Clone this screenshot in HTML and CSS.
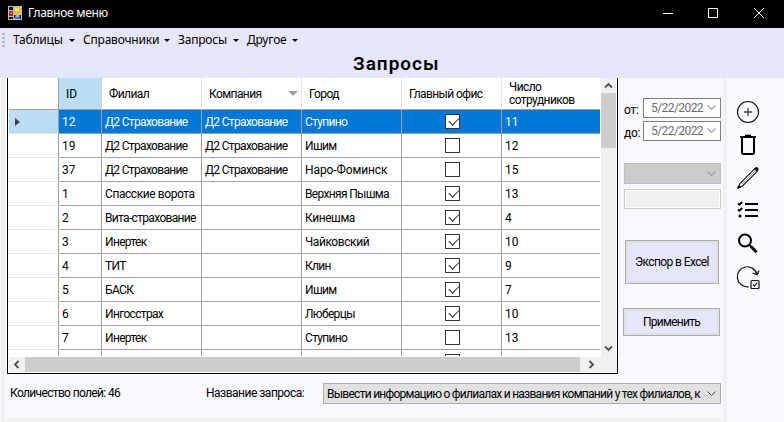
FILE: index.html
```html
<!DOCTYPE html>
<html lang="ru">
<head>
<meta charset="utf-8">
<title>Главное меню</title>
<link rel="stylesheet" href="styles.css">
</head>
<body>
<div class="window">
  <header class="titlebar">
    <svg class="app-icon" width="14" height="14" viewBox="0 0 14 14"><path fill="#bbb" d="M0 0h14v14H0z"/><path fill="#111" d="M1 1h4v3H1zM1 11h4v2H1zM12 9h1v4h-1zM6 9h1v3H6z"/><path fill="#f2bd24" d="M6 1h7v7H6z"/><path fill="#ffe48a" d="M7 2h4v3H7z"/><path fill="#b52222" d="M1 5h4v5H1z"/><path fill="#e76a5a" d="M2 6h2v2H2z"/><path fill="#3478e4" d="M7 9h5v4H7z"/><path fill="#82b5ff" d="M8 9h3v2H8z"/></svg>
    <span class="caption">Главное меню</span>
    <svg class="controls" width="104" height="12" viewBox="0 0 104 12" fill="none" stroke="#fff"><path d="M1 6.500h10M46.500 1.500h9v9h-9zM92 1l10 10M102 1L92 11"/></svg>
  </header>
  <div class="top">
    <nav class="menu">
      <i class="grip"></i>
      <span class="m1">Таблицы</span><span class="m2">Справочники</span><span class="m3">Запросы</span><span class="m4">Другое</span>
    </nav>
    <h1>Запросы</h1>
  </div>
  <div class="body">
    <main class="panel">
      <div class="work">
        <section class="grid">
          <div class="view">
            <div class="rows">
              <div class="row head"><b></b><b class="sel">ID</b><b>Филиал</b><b class="sorted">Компания</b><b>Город</b><b class="office">Главный офис</b><b class="two">Число<br>сотрудников</b></div>
              <div class="row active"><i><svg width="5" height="8"><path d="M0 0l5 4-5 4z" fill="#404040"/></svg></i><i class="num">12</i><i>Д2 Страхование</i><i>Д2 Страхование</i><i>Ступино</i><i class="check on"></i><i class="num">11</i></div>
              <div class="row"><i></i><i class="num">19</i><i>Д2 Страхование</i><i>Д2 Страхование</i><i>Ишим</i><i class="check"></i><i class="num">12</i></div>
              <div class="row"><i></i><i class="num">37</i><i>Д2 Страхование</i><i>Д2 Страхование</i><i class="num">Наро-Фоминск</i><i class="check"></i><i class="num">15</i></div>
              <div class="row"><i></i><i class="num">1</i><i class="loose">Спасские ворота</i><i></i><i>Верхняя Пышма</i><i class="check on"></i><i class="num">13</i></div>
              <div class="row"><i></i><i class="num">2</i><i>Вита-страхование</i><i></i><i class="loose">Кинешма</i><i class="check on"></i><i class="num">4</i></div>
              <div class="row"><i></i><i class="num">3</i><i>Инертек</i><i></i><i class="loose">Чайковский</i><i class="check on"></i><i class="num">10</i></div>
              <div class="row"><i></i><i class="num">4</i><i>ТИТ</i><i></i><i>Клин</i><i class="check on"></i><i class="num">9</i></div>
              <div class="row"><i></i><i class="num">5</i><i>БАСК</i><i></i><i>Ишим</i><i class="check on"></i><i class="num">7</i></div>
              <div class="row"><i></i><i class="num">6</i><i>Ингосстрах</i><i></i><i>Люберцы</i><i class="check on"></i><i class="num">10</i></div>
              <div class="row"><i></i><i class="num">7</i><i>Инертек</i><i></i><i>Ступино</i><i class="check"></i><i class="num">13</i></div>
              <div class="row"><i></i><i></i><i></i><i></i><i></i><i class="check"></i><i></i></div>
            </div>
            <div class="vscroll">
              <svg width="15" height="15"><path d="M4 9.500l3.500-3.500 3.500 3.500" class="arrow"/></svg>
              <div class="vthumb"></div>
              <svg class="down" width="15" height="15"><path d="M4 5.500l3.500 3.500 3.500-3.500" class="arrow"/></svg>
            </div>
          </div>
          <div class="hscroll">
            <svg width="16" height="15"><path d="M9.500 4L6 7.500 9.500 11" class="arrow"/></svg>
            <div class="hthumb"></div>
            <svg width="20" height="15"><path d="M9.500 4l3.500 3.500L9.500 11" class="arrow"/></svg>
          </div>
        </section>
        <aside class="filters">
          <div class="daterow"><label>от:</label><div class="date"><span>5/22/2022</span><svg width="9" height="6"><path d="M.5.5l4 4 4-4" class="chev"/></svg></div></div>
          <div class="daterow"><label>до:</label><div class="date"><span>5/22/2022</span><svg width="9" height="6"><path d="M.5.5l4 4 4-4" class="chev"/></svg></div></div>
          <div class="combo-off"><svg width="9" height="6"><path d="M.5.5l4 4 4-4" class="chev"/></svg></div>
          <div class="text-off"></div>
          <button class="export">Экспор в Excel</button>
          <button class="apply">Применить</button>
        </aside>
      </div>
      <footer>
        <span class="count">Количество полей: 46</span>
        <span class="label">Название запроса:</span>
        <div class="combo"><span class="value">Вывести информацию о филиалах и названия компаний у тех филиалов, к</span><svg width="9" height="6"><path d="M.5.5l4 4 4-4" fill="none" stroke="#444"/></svg></div>
      </footer>
    </main>
    <aside class="tools">
      <svg width="24" height="24" viewBox="0 0 24 24" fill="none" stroke="#111" stroke-width="1.100"><circle cx="12" cy="12" r="10.500"/><path d="M12 8v8M8 12h8" stroke="#444" stroke-width="1.300"/></svg>
      <svg width="24" height="24" viewBox="0 0 24 24" fill="none" stroke="#000" stroke-width="2"><path d="M6 5v14.500q0 1.500 1.500 1.500h9q1.500 0 1.500-1.500V5M4 4h16"/><path d="M9 2.700h6"/></svg>
      <svg width="24" height="24" viewBox="0 0 24 24" fill="none" stroke="#111" stroke-width="1.100"><path d="M2.500 21.500l1.400-4L18.700 2.700l2.600 2.600L6.500 20z"/><path d="M6 18L19 5" stroke-width=".4"/><path d="M1 23l1.300-4 2.700 2.700zM18 3l1.700-1.700q1-.7 2.200.5t.5 2.400L21 6z" fill="#000" stroke="none"/></svg>
      <svg width="24" height="24" viewBox="0 0 24 24" fill="none" stroke="#000" stroke-width="2"><path d="M9 5h13M9 11h13M9 17h13"/><path d="M2 4.500l1.300 1.200L6.300 3M2 10.500l1.300 1.200L6.300 9" stroke-width="1.800"/><circle cx="4" cy="17" r="1.500" fill="#000" stroke="none"/></svg>
      <svg width="24" height="24" viewBox="0 0 24 24" fill="none" stroke="#000"><circle cx="9" cy="8.500" r="6" stroke-width="2"/><path d="M13.300 12.800l1.700 1.700" stroke-width="2"/><path d="M15 14.500l5.700 5.700" stroke-width="3"/></svg>
      <svg width="24" height="24" viewBox="0 0 24 24" fill="none" stroke="#111" stroke-width="1.200"><path d="M12.500 21.700A10 10 0 1 1 21 9.500M16.500 8l4.800 1.800L23 5.500"/><rect x="15" y="15.500" width="8" height="8" rx="1"/><path d="M17 19.500l1.500 1.500 2.800-3.500"/></svg>
    </aside>
  </div>
</div>
</body>
</html>
```
FILE: styles.css
```css
* { box-sizing: border-box; }
body { margin: 0; font: 12px/16px Roboto, "Liberation Sans", sans-serif; letter-spacing: -.57px; color: #000; }
svg { display: block; flex: none; }
.window { width: 784px; height: 422px; overflow: hidden; display: flex; flex-direction: column; background: #f0f0f0; }
.titlebar { height: 28px; background: #000; color: #fff; display: flex; align-items: center; padding: 0 18px 3px 8px; }
.caption { margin-left: 6px; font: 12px/16px "Noto Sans", sans-serif; letter-spacing: -.28px; }
.controls { margin-left: auto; }
.top { height: 50px; background: #e6e6fa; }
.menu { height: 24px; display: flex; align-items: center; padding-left: 2px; font: 12px/16px "Noto Sans", sans-serif; letter-spacing: -.2px; }
.menu span { display: flex; justify-content: space-between; align-items: center; flex: none; }
.menu span::after { content: ""; border: 3px solid transparent; border-top-color: #000; border-bottom: 0; }
.grip { width: 3px; height: 15px; margin-right: 8px; background: repeating-linear-gradient(#b8b8c8 0 2px, transparent 2px 4px); }
.m1 { width: 62px; margin-right: 8px; }
.m2 { width: 87px; margin-right: 8px; }
.m3 { width: 61px; margin-right: 8px; }
.m4 { width: 51px; }
h1 { margin: 0; padding-left: 353px; font: 600 19px/24px Roboto, sans-serif; letter-spacing: 1px; }
.body { height: 344px; display: flex; border-left: 1px solid #f8f8ff; }
.panel { margin-left: 4px; width: 718px; height: 340px; background: #f8f8ff; }
.work { display: flex; height: 296px; padding-left: 2px; }
.grid { width: 611px; height: 296px; border: 1px solid #000; border-top: 0; background: #fff; padding-left: 1px; }
.view { height: 279px; display: flex; }
.rows { width: 591px; height: 278px; overflow: hidden; }
.row { display: grid; grid-template-columns: 50px 43px 100px 100px 100px 100px 98px; height: 24px; }
.row > * { font-style: normal; font-weight: 400; border-right: 1px solid #a0a0a0; border-bottom: 1px solid #a0a0a0; padding: 4px 0 0 3px; white-space: nowrap; line-height: 17px; overflow: hidden; letter-spacing: -.67px; }
.row > .loose { letter-spacing: -.42px; }
.row > .num { letter-spacing: -.1px; }
.row > :last-child { border-right: 0; }
.row > i:first-child { border-bottom-color: #e5e5e5; }
.head { height: 32px; }
.head > * { border-right-color: #e5e5e5; padding: 8px 0 0 7px; letter-spacing: -.58px; }
.head > :first-child { border-right-color: #a0a0a0; }
.head .sel { background: #bcdcf4; border-right-color: #bcdcf4; letter-spacing: 0; }
.head .two { line-height: 13px; padding-top: 3px; }
.sorted { display: flex; justify-content: space-between; padding-right: 3px; }
.sorted::after { content: ""; border: 5px solid transparent; border-top-color: #a0a0a0; border-bottom: 0; margin-top: 5px; height: 5px; }
.active { background: #0078d7; color: #fff; }
.active > i:first-child { background: #bcdcf4; padding: 8px 0 0 6px; }
.row .check { padding: 0 0 0 43px; display: flex; align-items: center; }
.check::before { content: ""; width: 13px; height: 13px; border: 1px solid #333; background: #fff; flex: none; }
.on::after { content: ""; width: 9px; height: 5px; border: solid #333; border-width: 0 0 1px 1px; transform: rotate(-45deg); margin: -3px 0 0 -11px; flex: none; }
.vscroll { width: 17px; height: 279px; background: #f0f0f0; border: solid #fff; border-width: 0 1px; }
.vthumb { height: 55px; background: #cdcdcd; }
.down { margin-top: 193px; }
.arrow { fill: none; stroke: #505050; stroke-width: 1.800; }
.hscroll { height: 15px; background: #f0f0f0; display: flex; }
.hthumb { width: 555px; background: #cdcdcd; }
.filters { width: 103px; padding: 20px 0 0 6px; }
.daterow { height: 20px; margin-bottom: 3px; display: flex; }
.daterow label { width: 19px; padding-top: 4px; letter-spacing: -.3px; }
.date { width: 78px; height: 20px; border: 1px solid #808080; background: #fff; color: #6d6d6d; display: flex; align-items: center; justify-content: space-between; padding: 0 4px 0 7px; }
.chev { fill: none; stroke: #a0a0a0; stroke-width: 1.200; }
.combo-off { width: 97px; height: 21px; margin-top: 22px; border: 1px solid #bfbfbf; background: #ccc; display: flex; align-items: center; justify-content: flex-end; padding-right: 4px; }
.text-off { width: 97px; height: 20px; margin-top: 5px; border: 1px solid #ccc; background: #f0f0f0; box-shadow: inset 0 0 0 1px #fff; }
button { display: block; border: 1px solid #adadad; box-shadow: inset 0 0 0 2px #e1e1e1; background: #e6e6fa; font: inherit; letter-spacing: -.6px; color: #000; padding: 0; white-space: nowrap; }
.export { width: 94px; height: 44px; margin: 31px 0 24px 1px; }
.apply { width: 97px; height: 28px; margin-left: -1px; letter-spacing: -.75px; }
footer { display: flex; height: 44px; padding: 9px 0 0 5px; }
footer > span { padding-top: 2px; white-space: nowrap; flex: none; }
.count { width: 196px; letter-spacing: -.65px; }
.label { width: 117px; letter-spacing: -.5px; }
.combo { width: 398px; height: 21px; border: 1px solid #adadad; background: #e1e1e1; display: flex; align-items: center; padding: 0 4px 0 3px; justify-content: space-between; }
.value { white-space: nowrap; letter-spacing: -.73px; }
.tools { margin-left: 4px; width: 57px; height: 344px; background: #f8f8ff; padding: 22px 0 0 9px; display: flex; flex-direction: column; gap: 9px; }
```
